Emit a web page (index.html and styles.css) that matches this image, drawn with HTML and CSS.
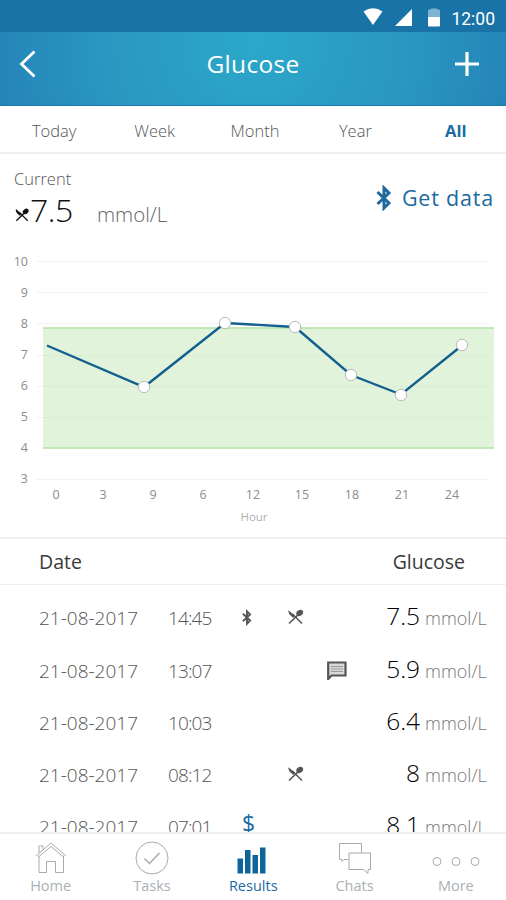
FILE: index.html
```html
<!DOCTYPE html>
<html lang="en">
<head>
    <meta charset="UTF-8">
    <meta name="viewport" content="width=device-width, initial-scale=1.0">
    <title>Glucose</title>
    <link rel="stylesheet" href="styles.css">
</head>
<body>

    <!-- Shared icons -->
    <svg class="symbols">
        <symbol id="bluetooth" viewBox="0 0 16 26">
            <path d="M1.5 7L13 18L8 23V3L13 8L1.5 19" fill="none" stroke="currentColor" stroke-width="3"/>
        </symbol>
        <symbol id="meal" viewBox="0 0 16 16">
            <path d="M1 1.2L7.2 6.4L5.8 9L2 5.6Q0.4 3.4 1 1.2Z" fill="currentColor"/>
            <path d="M5 5L14.5 14.5M1.5 14.5L11 5.4" stroke="currentColor" stroke-width="1.5" fill="none"/>
            <ellipse cx="12.2" cy="3.9" rx="3.6" ry="2.8" transform="rotate(-35 12.2 3.9)" fill="currentColor"/>
        </symbol>
    </svg>

    <div class="phone">

        <!-- Status bar -->
        <div class="status-bar">
            <svg class="wifi" width="20" height="18" viewBox="0 0 20 18"><path d="M0.5 3.5Q10 -3 19.5 3.5L10 17Z" fill="#fff"/></svg>
            <svg class="signal" width="17" height="17" viewBox="0 0 17 17"><path d="M17 0V17H0Z" fill="#fff"/></svg>
            <svg class="battery" width="12" height="19" viewBox="0 0 12 19">
                <path d="M0 2.5Q0 1.5 1 1.5H3V0.5H9V1.5H11Q12 1.5 12 2.5V9H0Z" fill="#7fb3d2"/>
                <path d="M0 9H12V17.5Q12 18.5 11 18.5H1Q0 18.5 0 17.5Z" fill="#fff"/>
            </svg>
            <span class="clock">12:00</span>
        </div>

        <!-- Header -->
        <header>
            <svg width="18" height="30" viewBox="0 0 18 30"><path d="M15.5 2.5L2.5 15L15.5 27.5" fill="none" stroke="#fff" stroke-width="2.8"/></svg>
            <h1>Glucose</h1>
            <svg width="24" height="24" viewBox="0 0 24 24"><path d="M12 0V24M0 12H24" stroke="#fff" stroke-width="3.2"/></svg>
        </header>

        <!-- Period tabs -->
        <div class="tabs">
            <span>Today</span>
            <span>Week</span>
            <span>Month</span>
            <span>Year</span>
            <span class="active">All</span>
        </div>

        <!-- Current value -->
        <div class="summary">
            <div class="current">
                <div class="label">Current</div>
                <div class="reading">
                    <svg width="16" height="14"><use href="#meal"/></svg>
                    <span class="number">7.5</span>
                    <span class="unit">mmol/L</span>
                </div>
            </div>
            <div class="get-data">
                <svg width="16" height="26"><use href="#bluetooth"/></svg>
                <span>Get data</span>
            </div>
        </div>

        <!-- Chart -->
        <svg class="chart" width="506" height="292" viewBox="0 245 506 292">
            <rect x="43" y="328" width="451" height="120" fill="#e1f4db"/>
            <path class="grid" d="M36 261.5H488M36 292.5H488M36 323.5H488M36 355.5H43M36 386.5H43M36 417.5H43M36 479.5H488"/>
            <path class="grid-band" d="M43 355.5H490M43 386.5H490M43 417.5H490"/>
            <path class="limit" d="M43 328H494M43 448H494"/>
            <path class="line" d="M47 345.5L144 387L225 323L295 327L351 375L401 394.5L462 345.5"/>
            <g class="points">
                <circle cx="144" cy="387" r="5.7"/>
                <circle cx="225" cy="323" r="5.7"/>
                <circle cx="295" cy="327" r="5.7"/>
                <circle cx="351" cy="375" r="5.7"/>
                <circle cx="401" cy="395" r="5.7"/>
                <circle cx="462" cy="345" r="5.7"/>
            </g>
            <g class="y-axis">
                <text x="28" y="266">10</text>
                <text x="28" y="297">9</text>
                <text x="28" y="328">8</text>
                <text x="28" y="359">7</text>
                <text x="28" y="390">6</text>
                <text x="28" y="421">5</text>
                <text x="28" y="452">4</text>
                <text x="28" y="483">3</text>
            </g>
            <g class="x-axis">
                <text x="56" y="499">0</text>
                <text x="103" y="499">3</text>
                <text x="153" y="499">9</text>
                <text x="203" y="499">6</text>
                <text x="253" y="499">12</text>
                <text x="302" y="499">15</text>
                <text x="352" y="499">18</text>
                <text x="402" y="499">21</text>
                <text x="452" y="499">24</text>
                <text class="hour" x="254" y="521">Hour</text>
            </g>
        </svg>

        <!-- Results -->
        <div class="table-head">
            <span>Date</span>
            <span>Glucose</span>
        </div>
        <div class="rows">
            <div class="row first">
                <span>21-08-2017</span>
                <span class="time">14:45</span>
                <span class="icon"><svg width="10" height="17"><use href="#bluetooth"/></svg></span>
                <span class="icon"><svg width="17" height="16"><use href="#meal"/></svg></span>
                <span></span>
                <span class="value">7.5</span>
                <span class="unit">mmol/L</span>
            </div>
            <div class="row">
                <span>21-08-2017</span>
                <span class="time">13:07</span>
                <span></span>
                <span></span>
                <span class="icon">
                    <svg width="20" height="19" viewBox="0 0 20 19">
                        <path d="M1.2 18V1.5H18.5V14.5H4.5Z" fill="#d9d9d9" stroke="currentColor" stroke-width="2.2"/>
                        <path d="M4 5.5H16M4 8H16M4 10.5H16" stroke="#999" stroke-width="1"/>
                    </svg>
                </span>
                <span class="value">5.9</span>
                <span class="unit">mmol/L</span>
            </div>
            <div class="row">
                <span>21-08-2017</span>
                <span class="time">10:03</span>
                <span></span>
                <span></span>
                <span></span>
                <span class="value">6.4</span>
                <span class="unit">mmol/L</span>
            </div>
            <div class="row">
                <span>21-08-2017</span>
                <span class="time">08:12</span>
                <span></span>
                <span class="icon"><svg width="17" height="16"><use href="#meal"/></svg></span>
                <span></span>
                <span class="value">8</span>
                <span class="unit">mmol/L</span>
            </div>
            <div class="row">
                <span>21-08-2017</span>
                <span class="time">07:01</span>
                <span class="dollar">$</span>
                <span></span>
                <span></span>
                <span class="value">8.1</span>
                <span class="unit">mmol/L</span>
            </div>
        </div>

        <!-- Bottom navigation -->
        <nav>
            <a class="home">
                <svg width="32" height="34" viewBox="0 0 32 34">
                    <path d="M1 15L16 2L31 15M4 14.5V31.5H11.5V20.5H20.5V31.5H28.5V14.5M3.5 16L16 5.5L28.5 16M4 12V5H8V8.5"/>
                </svg>
                <span>Home</span>
            </a>
            <a class="tasks">
                <svg width="34" height="34" viewBox="0 0 34 34">
                    <circle cx="17" cy="17" r="16"/>
                    <path d="M9.5 17.5L14.5 22.5L24.5 12" stroke-width="1.5"/>
                </svg>
                <span>Tasks</span>
            </a>
            <a class="results active">
                <svg width="30" height="34" viewBox="0 0 30 34">
                    <path d="M-0.5 17.5H5V32.5H-0.5ZM7 9H12.5V32.5H7ZM14.5 14H20V32.5H14.5ZM22 6.5H27.5V32.5H22Z"/>
                </svg>
                <span>Results</span>
            </a>
            <a class="chats">
                <svg width="34" height="34" viewBox="0 0 34 34">
                    <path d="M10.5 18.5H6L4 20.5V18.5H1.5V2.5H23.5V12M11 12H32.5V28.5H30V32.5L25.5 28.5H11Z"/>
                </svg>
                <span>Chats</span>
            </a>
            <a class="more">
                <svg width="48" height="34" viewBox="0 0 48 34">
                    <circle cx="5" cy="20.5" r="4"/>
                    <circle cx="24" cy="20.5" r="4"/>
                    <circle cx="43" cy="20.5" r="4"/>
                </svg>
                <span>More</span>
            </a>
        </nav>

    </div>

</body>
</html>
```

FILE: styles.css
```css
/* General body styling */
body {
    font-family: "Open Sans", "Noto Sans", sans-serif;
    font-weight: 300;
    margin: 0;
    padding: 0;
    background-color: white;
    color: #555;
}

.symbols {
    display: none;
}

.phone {
    width: 506px;
    height: 900px;
    display: flex;
    flex-direction: column;
    overflow: hidden;
}

.phone > * {
    box-sizing: border-box;
    flex: none;
}

/* Status bar */
.status-bar {
    height: 32px;
    padding: 4px 11px 0 0;
    background-color: #1a73a7;
    display: flex;
    align-items: center;
    justify-content: flex-end;
}

.signal {
    margin: -2px 16px 0 12px;
}

.battery {
    margin: -2px 11px 0 0;
}

.wifi {
    margin-top: -3px;
}

.clock {
    font-family: Roboto, sans-serif;
    font-weight: 400;
    font-size: 17.5px;
    line-height: 24px;
    padding-top: 1px;
    color: white;
}

/* Header styling */
header {
    height: 74px;
    padding: 0 27px 10px 19px;
    background: radial-gradient(circle 270px at 255px 10px, #2ba8c9, #2a97c1 55%, #2483b7);
    border-bottom: 1px solid #1c78aa;
    display: flex;
    align-items: center;
    justify-content: space-between;
}

h1 {
    margin: 0 0 0 14px;
    font-size: 24.5px;
    font-weight: 400;
    letter-spacing: 0.3px;
    color: white;
}

/* Period tabs */
.tabs {
    height: 48px;
    padding: 3px 0 0 4px;
    border-bottom: 2px solid #eee;
    display: grid;
    grid-template-columns: repeat(5, 100.4px);
    align-items: center;
    text-align: center;
    font-size: 16.5px;
}

.tabs .active {
    font-weight: 700;
    color: #1a6ba3;
}

/* Current value */
.summary {
    height: 91px;
    padding: 12px 12px 0 14px;
    display: flex;
    justify-content: space-between;
}

.label {
    font-size: 16.5px;
    line-height: 26px;
}

.reading {
    display: flex;
    align-items: baseline;
    line-height: 35px;
    color: #111;
}

.number {
    width: 67px;
    font-size: 32px;
    letter-spacing: -0.5px;
}

.reading .unit {
    font-size: 20.5px;
    color: #666;
}

.get-data {
    height: 63px;
    display: flex;
    align-items: center;
    gap: 10px;
    font-size: 21.5px;
    font-weight: 400;
    letter-spacing: 0.8px;
    color: #20699f;
}

.get-data span {
    margin-top: -1px;
}

/* Chart */
.chart {
    display: block;
}

.grid {
    stroke: #f3f3f3;
}

.grid-band {
    stroke: #d9ecd4;
}

.limit {
    stroke: #b4e2a4;
    stroke-width: 1.6;
}

.line {
    fill: none;
    stroke: #135f8f;
    stroke-width: 2.4;
}

.points {
    fill: white;
    stroke: #bbb;
}

.y-axis, .x-axis {
    font-size: 12.5px;
    font-weight: 400;
    fill: #8c8c8c;
}

.y-axis {
    text-anchor: end;
}

.x-axis {
    text-anchor: middle;
}

.hour {
    font-size: 11.5px;
    fill: #b0b0b0;
}

/* Results table */
.table-head {
    height: 48px;
    padding: 0 41px 1px 39px;
    border-top: 2px solid #f0f0f0;
    border-bottom: 1px solid #eee;
    display: flex;
    align-items: center;
    justify-content: space-between;
    font-size: 19.5px;
    font-weight: 400;
    color: #3a3a3a;
}

.rows {
    height: 247px;
    padding: 5px 0 0 39px;
    overflow: hidden;
}

.row {
    height: 52px;
    display: grid;
    grid-template-columns: 129px 54px 50px 46px 38px 64px 70px;
    align-items: baseline;
    line-height: 52px;
    font-size: 19px;
}

.row.first {
    height: 53px;
}

.time {
    letter-spacing: -0.9px;
}

.icon {
    display: flex;
    align-self: center;
    justify-content: center;
    color: #555;
}

.value {
    font-size: 24.5px;
    text-align: right;
    color: #000;
}

.row .unit {
    padding-left: 5px;
    font-size: 18px;
    color: #777;
}

.dollar {
    font-size: 23px;
    line-height: 49px;
    font-weight: 400;
    text-align: center;
    align-self: start;
    padding-left: 3px;
    color: #1a6ba3;
}

/* Bottom navigation */
nav {
    height: 68px;
    padding-top: 7px;
    border-top: 2px solid #eee;
    background-color: white;
    display: grid;
    grid-template-columns: repeat(5, 101.3px);
}

nav a {
    display: flex;
    flex-direction: column;
    align-items: center;
    font-size: 14.5px;
    line-height: 22px;
    color: #aab0b5;
    font-weight: 400;
}

nav svg {
    fill: none;
    stroke: #a5abb0;
    overflow: visible;
}

nav .active {
    color: #1a6ba3;
}

nav .active svg {
    fill: #0f6599;
    stroke: none;
}
```
